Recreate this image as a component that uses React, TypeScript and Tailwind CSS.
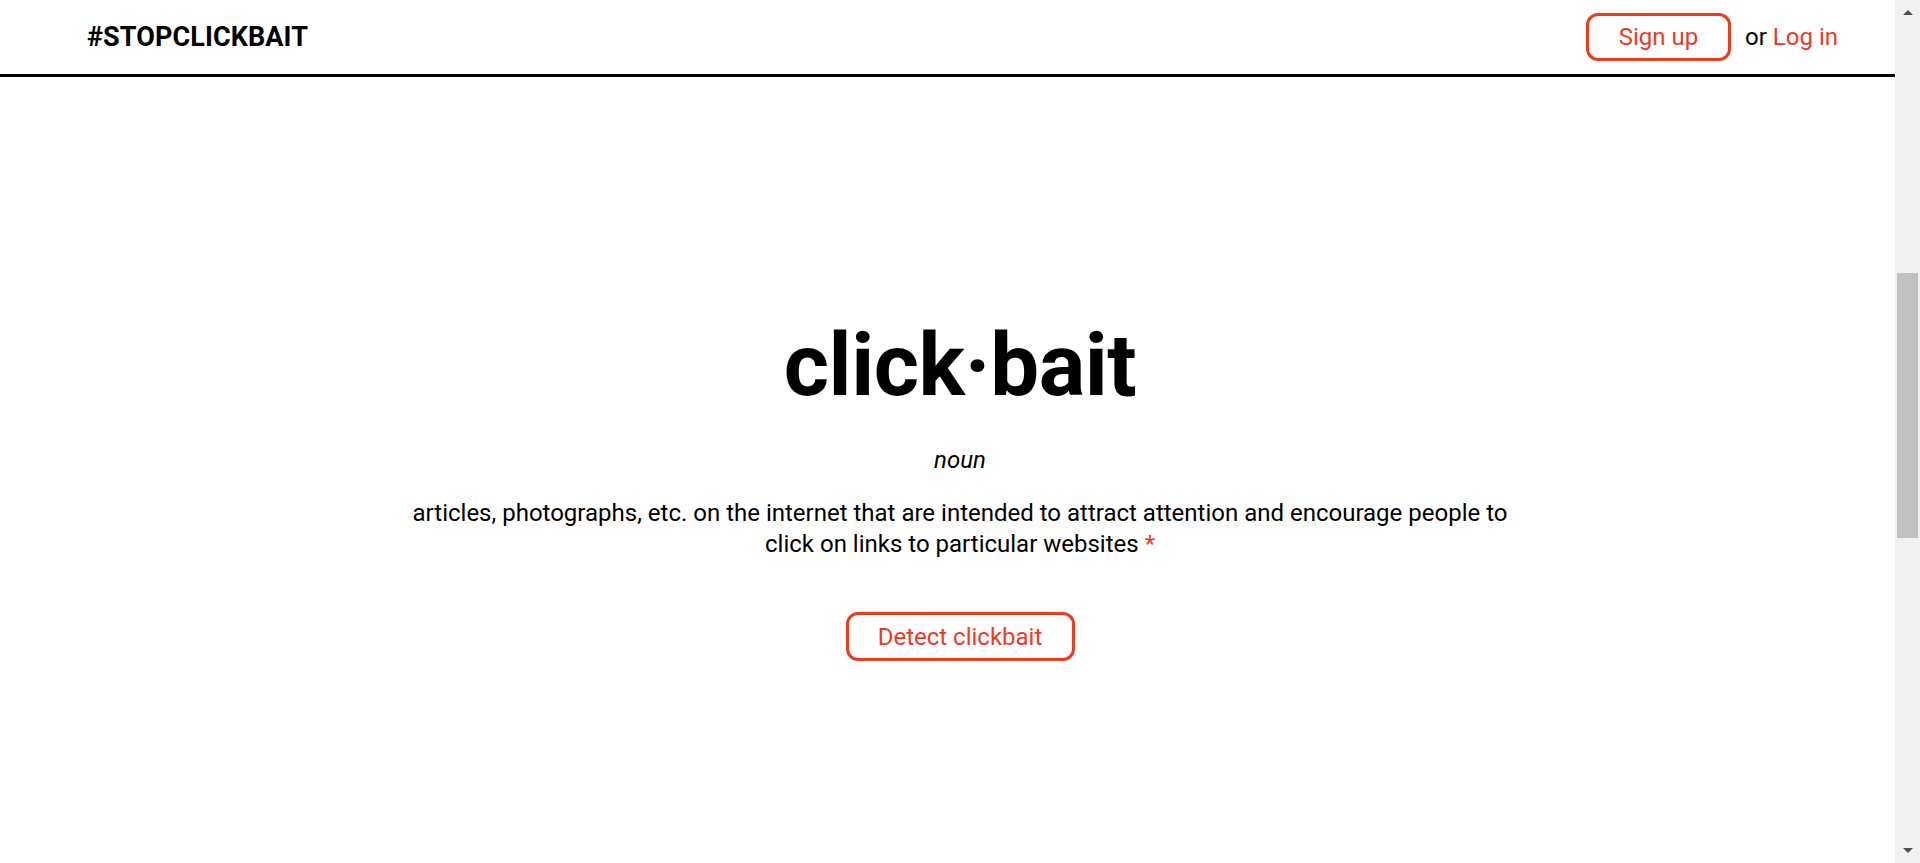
export default function App() {
  return (
    <div className="flex h-[863px] w-full overflow-hidden bg-white font-['Roboto',sans-serif] text-black">
      <div className="flex min-w-0 flex-1 flex-col">
        {/* Header */}
        <header className="flex h-[77px] shrink-0 items-center justify-between border-b-[3px] border-black pl-[87px] pr-[57px]">
          <a href="#" className="text-[27px] font-bold leading-none tracking-[0.1px]">
            #STOPCLICKBAIT
          </a>
          <div className="flex items-center text-[24px]">
            <button className="flex h-[48px] w-[145px] items-center justify-center rounded-[12px] border-[3px] border-[#ee3a1f] text-[#ee3a1f]">
              Sign up
            </button>
            <span className="ml-[14px]">or</span>
            <a href="#" className="ml-[6px] text-[#ee3a1f]">
              Log in
            </a>
          </div>
        </header>

        {/* Hero */}
        <main className="flex flex-col items-center">
          <h1 className="ml-[25px] mt-[245px] text-[87px] font-bold leading-none tracking-[-0.5px]">
            click·bait
          </h1>
          <p className="ml-[25px] mt-[37px] text-[24px] italic leading-[28px]">noun</p>
          <p className="ml-[25px] mt-[24px] w-[1120px] text-center text-[24px] leading-[31px]">
            articles, photographs, etc. on the internet that are intended to attract attention and
            encourage people to click on links to particular websites{" "}
            <span className="text-[#ee3a1f]">*</span>
          </p>
          <button className="ml-[25px] mt-[52px] flex h-[49px] w-[229px] items-center justify-center rounded-[12px] border-[3px] border-[#ee3a1f] text-[24px] text-[#ee3a1f]">
            Detect clickbait
          </button>
        </main>
      </div>

      {/* Scrollbar */}
      <div className="flex w-[25px] shrink-0 flex-col items-center bg-[#f1f1f1]">
        <div className="flex h-[25px] w-full items-center justify-center">
          <div className="h-0 w-0 border-x-[5px] border-b-[5px] border-x-transparent border-b-[#505050]" />
        </div>
        <div className="mt-[248px] h-[265px] w-[21px] bg-[#c1c1c1]" />
        <div className="flex-1" />
        <div className="flex h-[25px] w-full items-center justify-center">
          <div className="h-0 w-0 border-x-[5px] border-t-[5px] border-x-transparent border-t-[#505050]" />
        </div>
      </div>
    </div>
  );
}
